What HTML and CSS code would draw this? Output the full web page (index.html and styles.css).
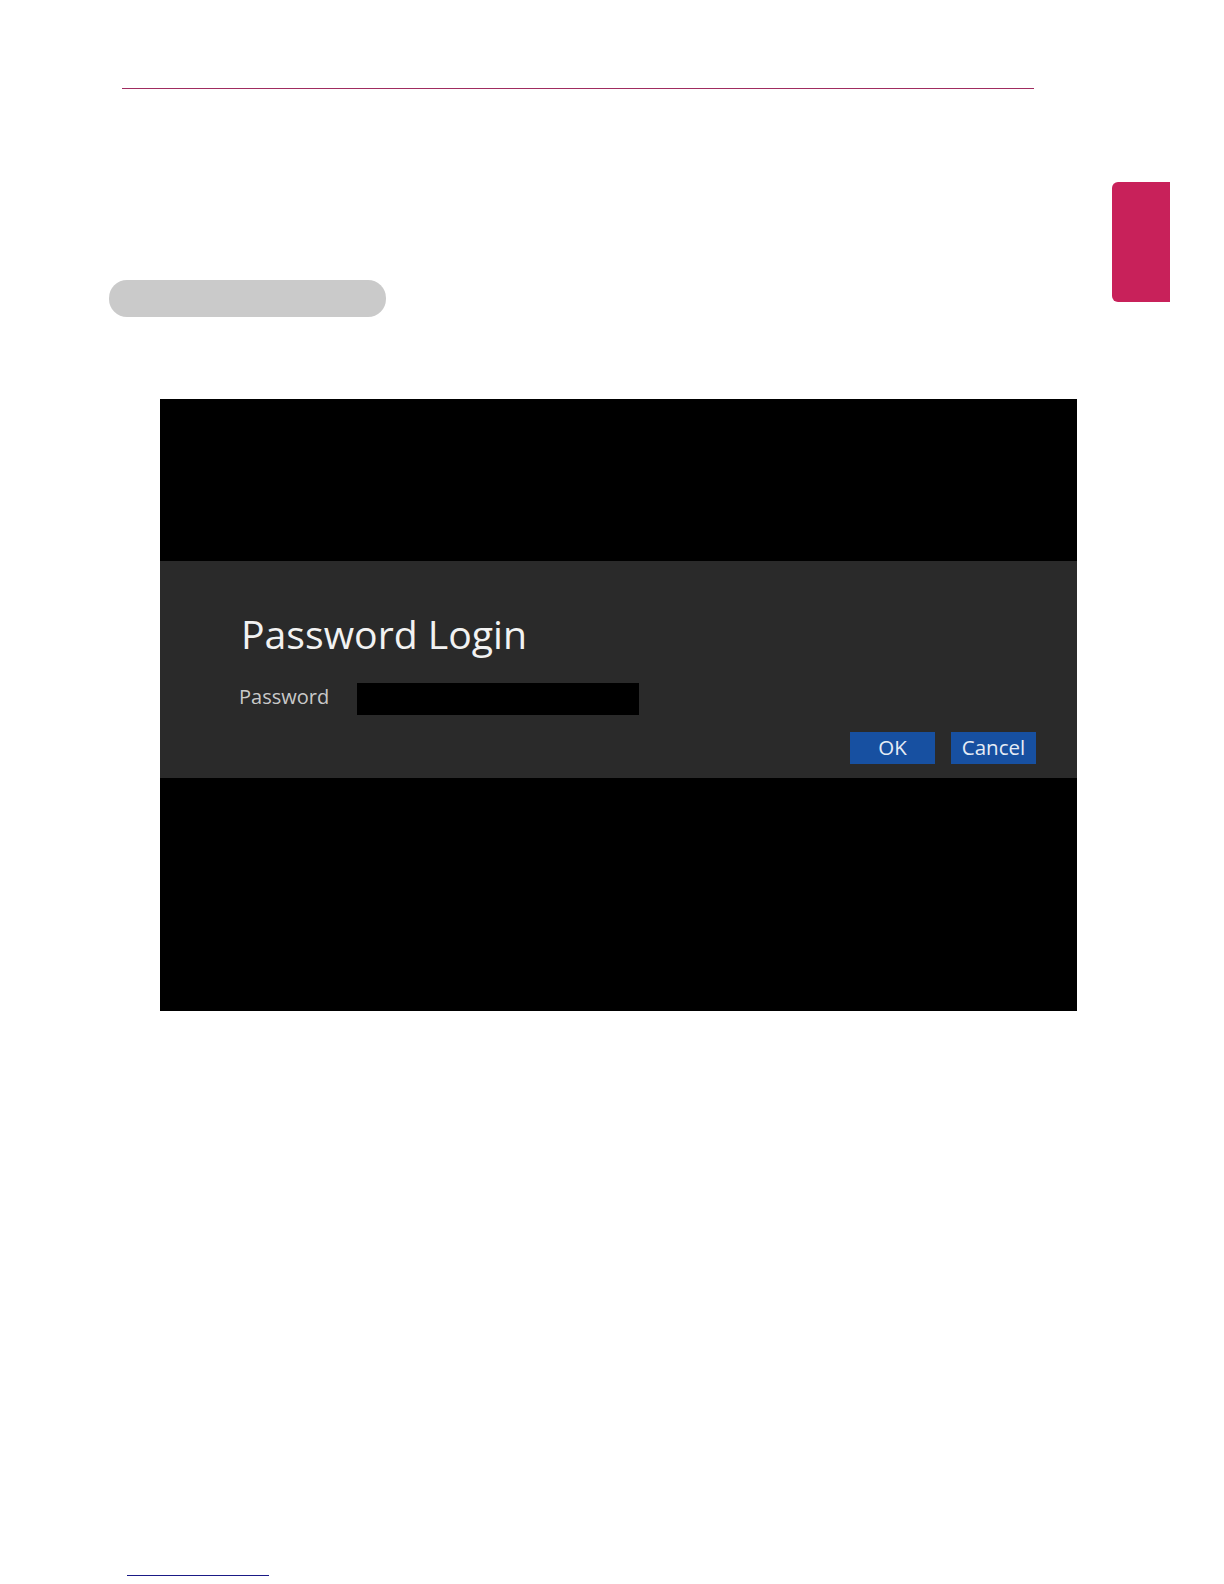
FILE: index.html
```html
<!DOCTYPE html>
<html lang="en">
<head>
<meta charset="utf-8">
<title>Password Login</title>
<link rel="stylesheet" href="styles.css">
</head>
<body>
<div class="page">
  <div class="top-rule"></div>
  <div class="side-tab"></div>
  <div class="section-pill"></div>
  <div class="screen">
    <div class="screen-top"></div>
    <div class="dialog">
      <div class="dialog-title">Password Login</div>
      <div class="field-row">
        <span class="field-label">Password</span>
        <div class="field-input"></div>
      </div>
      <div class="button-row">
        <div class="btn">OK</div>
        <div class="btn">Cancel</div>
      </div>
    </div>
    <div class="screen-bottom"></div>
  </div>
  <div class="bottom-rule"></div>
</div>
</body>
</html>
```

FILE: styles.css
```css
html, body {
  margin: 0;
  padding: 0;
  background: #ffffff;
}

.page {
  position: relative;
  width: 1224px;
  height: 1584px;
  overflow: hidden;
  display: flex;
  flex-direction: column;
  align-items: flex-start;
}

.top-rule {
  margin-top: 88px;
  margin-left: 122px;
  width: 912px;
  height: 1px;
  background: #a02c60;
}

.side-tab {
  position: absolute;
  left: 1112px;
  top: 182px;
  width: 58px;
  height: 120px;
  background: #c8215a;
  border-radius: 6px 0 0 6px;
}

.section-pill {
  margin-top: 191px;
  margin-left: 109px;
  width: 277px;
  height: 37px;
  border-radius: 18px;
  background: #cacaca;
}

.screen {
  margin-top: 82px;
  margin-left: 160px;
  width: 917px;
  background: #000000;
  display: flex;
  flex-direction: column;
}

.screen-top {
  height: 162px;
}

.screen-bottom {
  height: 233px;
}

.dialog {
  background: #2a2a2a;
  padding: 49px 41px 14px 80px;
  display: flex;
  flex-direction: column;
  font-family: "Open Sans", "Noto Sans", sans-serif;
}

.dialog-title {
  font-size: 39.2px;
  line-height: 48px;
  color: #f2f2f2;
  margin-left: 1px;
}

.field-row {
  margin-top: 25px;
  display: flex;
  align-items: center;
  height: 32px;
}

.field-label {
  width: 117px;
  font-size: 20px;
  line-height: 28px;
  padding-bottom: 4px;
  color: #c9c9c9;
  margin-left: -1px;
}

.field-input {
  width: 282px;
  height: 32px;
  background: #000000;
  margin-left: 1px;
}

.button-row {
  margin-top: 17px;
  display: flex;
  justify-content: flex-end;
  gap: 16px;
}

.btn {
  width: 85px;
  height: 32px;
  background: #1750a1;
  color: #e6ecf5;
  font-size: 20.5px;
  line-height: 30px;
  text-align: center;
}

.bottom-rule {
  margin-top: 564px;
  margin-left: 127px;
  width: 142px;
  height: 1px;
  background: #1a1a86;
}
```
